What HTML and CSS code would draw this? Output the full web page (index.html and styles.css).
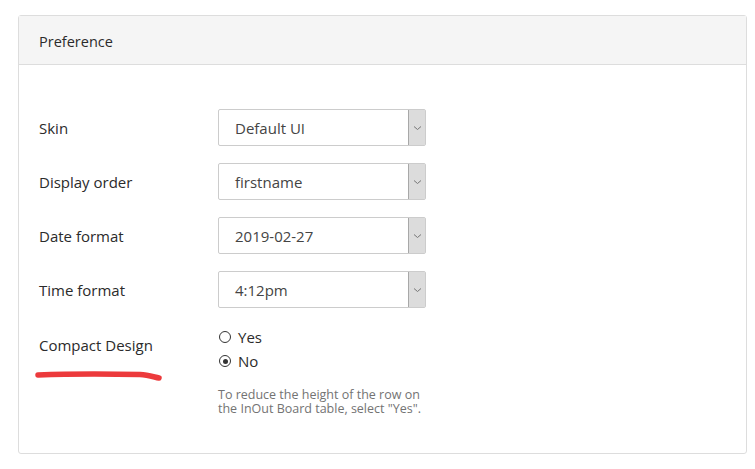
FILE: index.html
```html
<!DOCTYPE html>
<html lang="en">

<head>
    <meta charset="UTF-8">
    <meta name="viewport" content="width=device-width, initial-scale=1.0">
    <title>Preference</title>
    <link rel="stylesheet" href="styles.css">
</head>

<body>
    <div class="panel">
        <div class="panel-heading">Preference</div>

        <div class="panel-body">
            <div class="form-row">
                <label class="form-label">Skin</label>
                <div class="select-box">
                    <span class="select-value">Default UI</span>
                    <span class="select-btn">
                        <svg width="9" height="6" viewBox="0 0 9 6"><path d="M1 1.5 L4.5 4.5 L8 1.5" fill="none" stroke="#777" stroke-width="1"/></svg>
                    </span>
                </div>
            </div>

            <div class="form-row">
                <label class="form-label">Display order</label>
                <div class="select-box">
                    <span class="select-value">firstname</span>
                    <span class="select-btn">
                        <svg width="9" height="6" viewBox="0 0 9 6"><path d="M1 1.5 L4.5 4.5 L8 1.5" fill="none" stroke="#777" stroke-width="1"/></svg>
                    </span>
                </div>
            </div>

            <div class="form-row">
                <label class="form-label">Date format</label>
                <div class="select-box">
                    <span class="select-value">2019-02-27</span>
                    <span class="select-btn">
                        <svg width="9" height="6" viewBox="0 0 9 6"><path d="M1 1.5 L4.5 4.5 L8 1.5" fill="none" stroke="#777" stroke-width="1"/></svg>
                    </span>
                </div>
            </div>

            <div class="form-row">
                <label class="form-label">Time format</label>
                <div class="select-box">
                    <span class="select-value">4:12pm</span>
                    <span class="select-btn">
                        <svg width="9" height="6" viewBox="0 0 9 6"><path d="M1 1.5 L4.5 4.5 L8 1.5" fill="none" stroke="#777" stroke-width="1"/></svg>
                    </span>
                </div>
            </div>

            <div class="form-row top">
                <label class="form-label compact">Compact Design</label>
                <div class="radio-group">
                    <div class="radio-line"><span class="radio"></span>Yes</div>
                    <div class="radio-line"><span class="radio checked"></span>No</div>
                    <p class="help">To reduce the height of the row on the InOut Board table, select "Yes".</p>
                </div>
            </div>
        </div>

        <!-- red marker stroke under the label -->
        <svg class="marker" width="140" height="16" viewBox="0 0 140 16">
            <path d="M4 6 C 30 5, 80 5, 106 5.5 C 114 6, 120 8, 125 9" fill="none" stroke="#ec3a3c" stroke-width="5.5" stroke-linecap="round"/>
        </svg>
    </div>
</body>

</html>
```

FILE: styles.css
```css
body {
    margin: 0;
    padding: 15px 8px 0 18px;
    font-family: 'Open Sans', 'Noto Sans', sans-serif;
    font-size: 14px;
    color: #333;
    background: #fff;
}

.panel {
    position: relative;
    width: 727px;
    border: 1px solid #ddd;
    border-radius: 3px;
}

.panel-heading {
    background: #f5f5f5;
    border-bottom: 1px solid #ddd;
    padding: 16px 20px 12px;
    line-height: 20px;
    font-size: 14.5px;
    color: #2b2b2b;
}

.panel-body {
    padding: 44px 20px 37px;
}

.form-row {
    display: flex;
    align-items: center;
    margin-bottom: 17px;
}

.form-row.top {
    align-items: flex-start;
    margin-bottom: 0;
}

.form-label {
    width: 179px;
    flex-shrink: 0;
    font-size: 15px;
    line-height: 20px;
    color: #2b2b2b;
}

.form-label.compact {
    padding-top: 10px;
}

.select-box {
    display: flex;
    width: 206px;
    height: 35px;
    border: 1px solid #ccc;
    border-radius: 2px;
}

.select-value {
    flex: 1;
    padding-left: 16px;
    line-height: 36px;
    font-size: 15px;
    color: #444;
}

.select-btn {
    width: 16px;
    display: flex;
    align-items: center;
    justify-content: center;
    background: #dcdcdc;
    border-left: 1px solid #a8a8a8;
}

.radio-group {
    width: 215px;
}

.radio-line {
    display: flex;
    align-items: center;
    height: 24px;
    font-size: 15px;
    color: #2b2b2b;
}

.radio {
    width: 12px;
    height: 12px;
    border: 1px solid #333;
    border-radius: 50%;
    margin: 0 7px 0 1px;
    position: relative;
    box-sizing: border-box;
}

.radio.checked::after {
    content: "";
    position: absolute;
    left: 2.5px;
    top: 2.5px;
    width: 5px;
    height: 5px;
    border-radius: 50%;
    background: #333;
}

.help {
    margin: 15px 0 0;
    font-size: 12.5px;
    line-height: 14px;
    color: #737373;
}

.marker {
    position: absolute;
    left: 15px;
    top: 353px;
}
```
